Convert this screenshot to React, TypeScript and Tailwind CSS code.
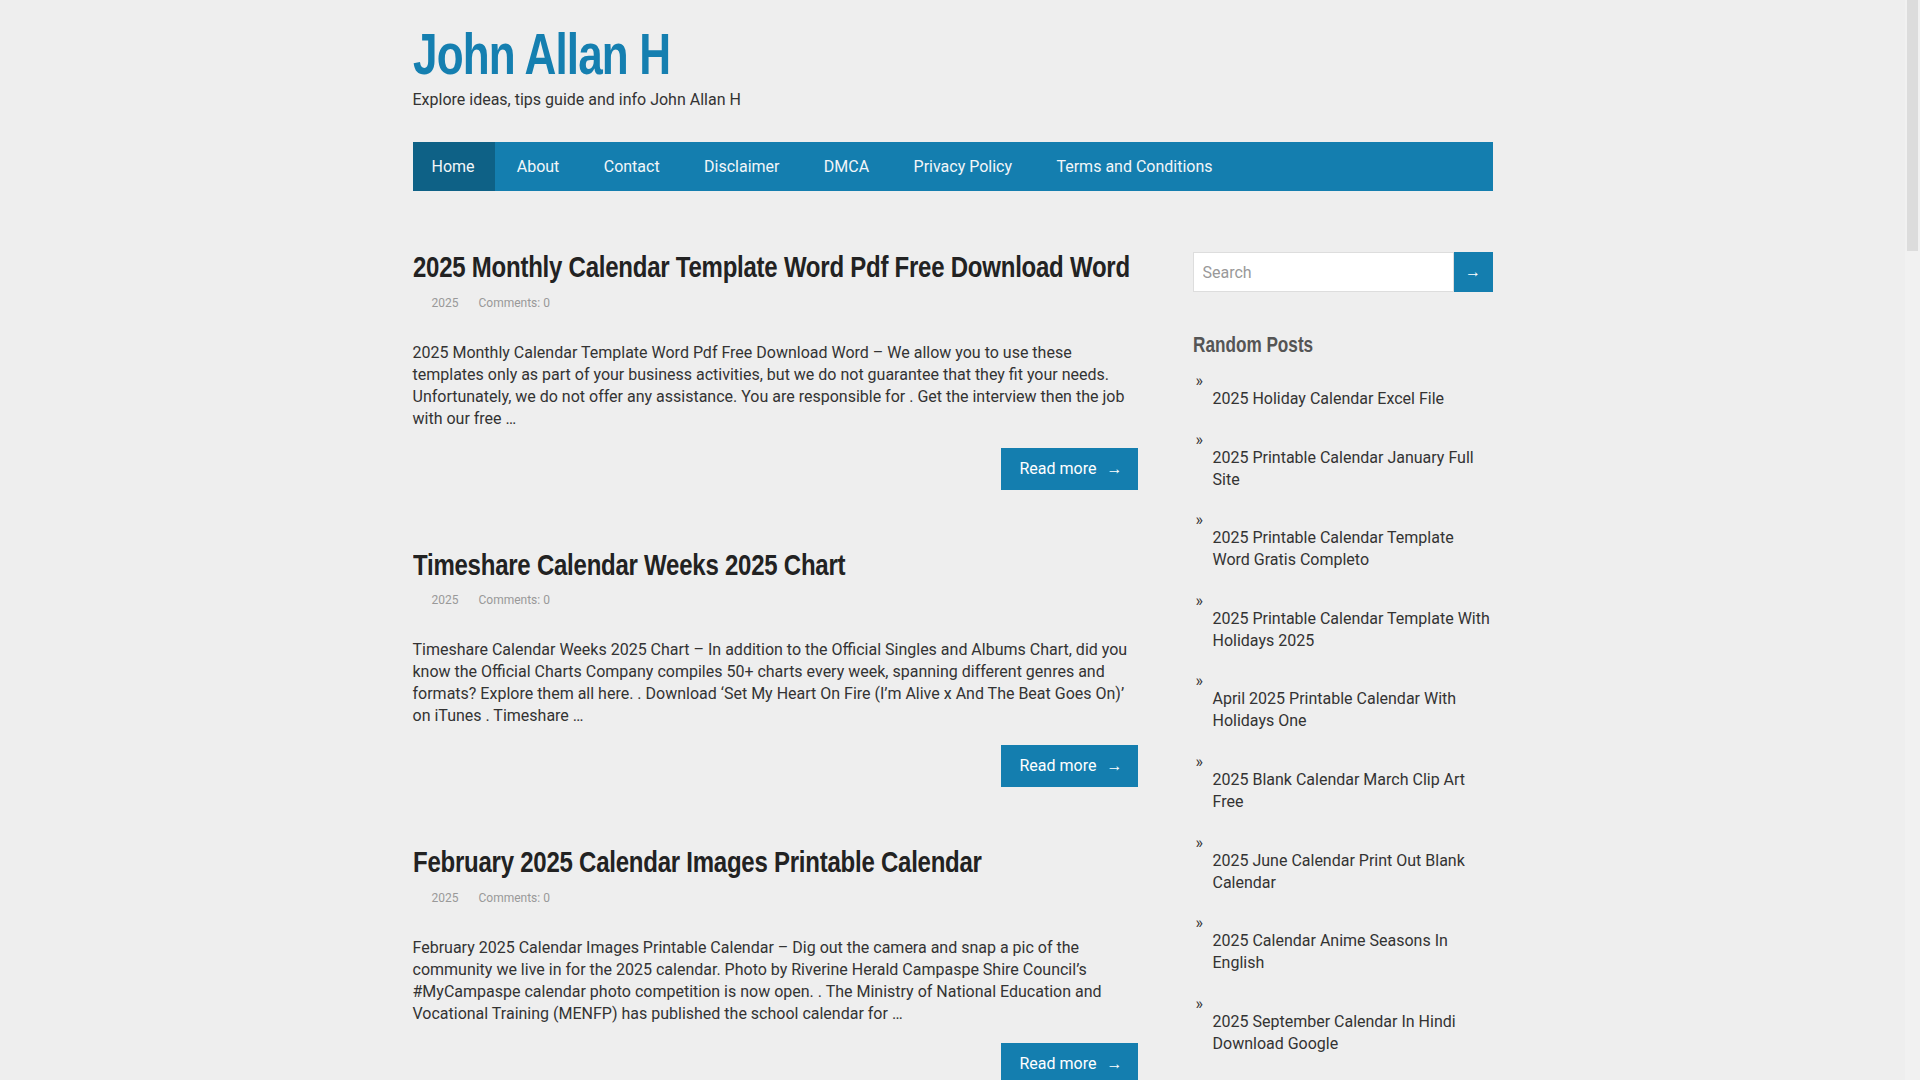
const navItems = ['Home', 'About', 'Contact', 'Disclaimer', 'DMCA', 'Privacy Policy', 'Terms and Conditions']

const posts = [
  {
    title: '2025 Monthly Calendar Template Word Pdf Free Download Word',
    excerpt:
      '2025 Monthly Calendar Template Word Pdf Free Download Word – We allow you to use these templates only as part of your business activities, but we do not guarantee that they fit your needs. Unfortunately, we do not offer any assistance. You are responsible for . Get the interview then the job with our free …',
  },
  {
    title: 'Timeshare Calendar Weeks 2025 Chart',
    excerpt:
      'Timeshare Calendar Weeks 2025 Chart – In addition to the Official Singles and Albums Chart, did you know the Official Charts Company compiles 50+ charts every week, spanning different genres and formats? Explore them all here. . Download ‘Set My Heart On Fire (I’m Alive x And The Beat Goes On)’ on iTunes . Timeshare …',
  },
  {
    title: 'February 2025 Calendar Images Printable Calendar',
    excerpt:
      'February 2025 Calendar Images Printable Calendar – Dig out the camera and snap a pic of the community we live in for the 2025 calendar. Photo by Riverine Herald Campaspe Shire Council’s #MyCampaspe calendar photo competition is now open. . The Ministry of National Education and Vocational Training (MENFP) has published the school calendar for …',
  },
]

const randomPosts = [
  '2025 Holiday Calendar Excel File',
  '2025 Printable Calendar January Full Site',
  '2025 Printable Calendar Template Word Gratis Completo',
  '2025 Printable Calendar Template With Holidays 2025',
  'April 2025 Printable Calendar With Holidays One',
  '2025 Blank Calendar March Clip Art Free',
  '2025 June Calendar Print Out Blank Calendar',
  '2025 Calendar Anime Seasons In English',
  '2025 September Calendar In Hindi Download Google',
]

// narrow headline face: Arial-metric bold squeezed like Arial Narrow
const narrow = "font-['Liberation_Sans','Arial',sans-serif] font-bold"

export default function App() {
  return (
    <div className="flex h-screen overflow-hidden bg-[#eeeeee] font-['Roboto',sans-serif] text-[16px] text-[#333]">
      <div className="min-w-0 flex-1 overflow-hidden">
        <div className="mx-auto w-[1080px] pb-[80px]">
          {/* Header */}
          <header className="pt-[25px]">
            <h1 className={`${narrow} text-[58px] leading-[58px] text-[#157fb0]`}>
              <span className="inline-block origin-left scale-x-[0.76] whitespace-nowrap tracking-[-0.02em]">John Allan H</span>
            </h1>
            <p className="mt-[6px] leading-[22px] text-[#333]">Explore ideas, tips guide and info John Allan H</p>
          </header>

          {/* Nav */}
          <nav className="mt-[31px] flex h-[49px] bg-[#147eaf]">
            {navItems.map((n, i) => (
              <a
                key={n}
                href="#"
                className={`flex items-center text-[16px] text-[#f2f6f9] ${i === 0 ? 'bg-[#0e6186] pl-[19px] pr-[20px]' : 'px-[22.2px]'}`}
              >
                {n}
              </a>
            ))}
          </nav>

          <div className="mt-[58px] flex justify-between">
            {/* Posts */}
            <main className="w-[725px]">
              {posts.map((p, i) => (
                <article key={i} className={i > 0 ? 'mt-[57px]' : ''}>
                  <h2 className={`${narrow} text-[30px] leading-[36px] text-[#222]`}>
                    <span className="inline-block origin-left scale-x-[0.8] whitespace-nowrap tracking-[-0.01em]">{p.title}</span>
                  </h2>
                  <div className="mt-[8.5px] flex text-[12px] leading-[18px] text-[#999]">
                    <span className="pl-[19px]">2025</span>
                    <span className="pl-[20px]">Comments: 0</span>
                  </div>
                  <p className="mt-[30px] leading-[22px] text-[#333]">{p.excerpt}</p>
                  <div className="mt-[18px] flex justify-end">
                    <a href="#" className="flex h-[42px] w-[137px] items-center bg-[#147eaf] pl-[19px] text-[16px] leading-[22px] text-white">
                      <span>Read more</span>
                      <span className="ml-[10px] text-[16px] leading-[22px]">→</span>
                    </a>
                  </div>
                </article>
              ))}
            </main>

            {/* Sidebar */}
            <aside className="w-[300px] pt-[3px]">
              <form className="flex h-[40px]" onSubmit={e => e.preventDefault()}>
                <input
                  type="text"
                  placeholder="Search"
                  className="h-full min-w-0 flex-1 border border-[#dddddd] bg-white px-[9px] text-[16px] text-[#333] placeholder-[#999] outline-none"
                />
                <button type="submit" className="h-full w-[39px] bg-[#147eaf] text-[16px] text-white">→</button>
              </form>

              <h3 className={`mt-[40px] ${narrow} text-[22px] leading-[26px] text-[#555]`}>
                <span className="inline-block origin-left scale-x-[0.78] whitespace-nowrap">Random Posts</span>
              </h3>
              <ul className="mt-[18px]">
                {randomPosts.map(r => (
                  <li key={r} className="pb-[24.6px]">
                    <div className="h-[12px] pl-[3px] text-[16px] leading-[9px] text-[#333]">»</div>
                    <a href="#" className="block pl-[20px] leading-[22px] text-[#333]">{r}</a>
                  </li>
                ))}
              </ul>
            </aside>
          </div>
        </div>
      </div>

      {/* scrollbar strip */}
      <div className="w-[15px] shrink-0 bg-[#f1f1f1] px-[2px]">
        <div className="h-[251px] bg-[#dcdcdc]" />
      </div>
    </div>
  )
}
